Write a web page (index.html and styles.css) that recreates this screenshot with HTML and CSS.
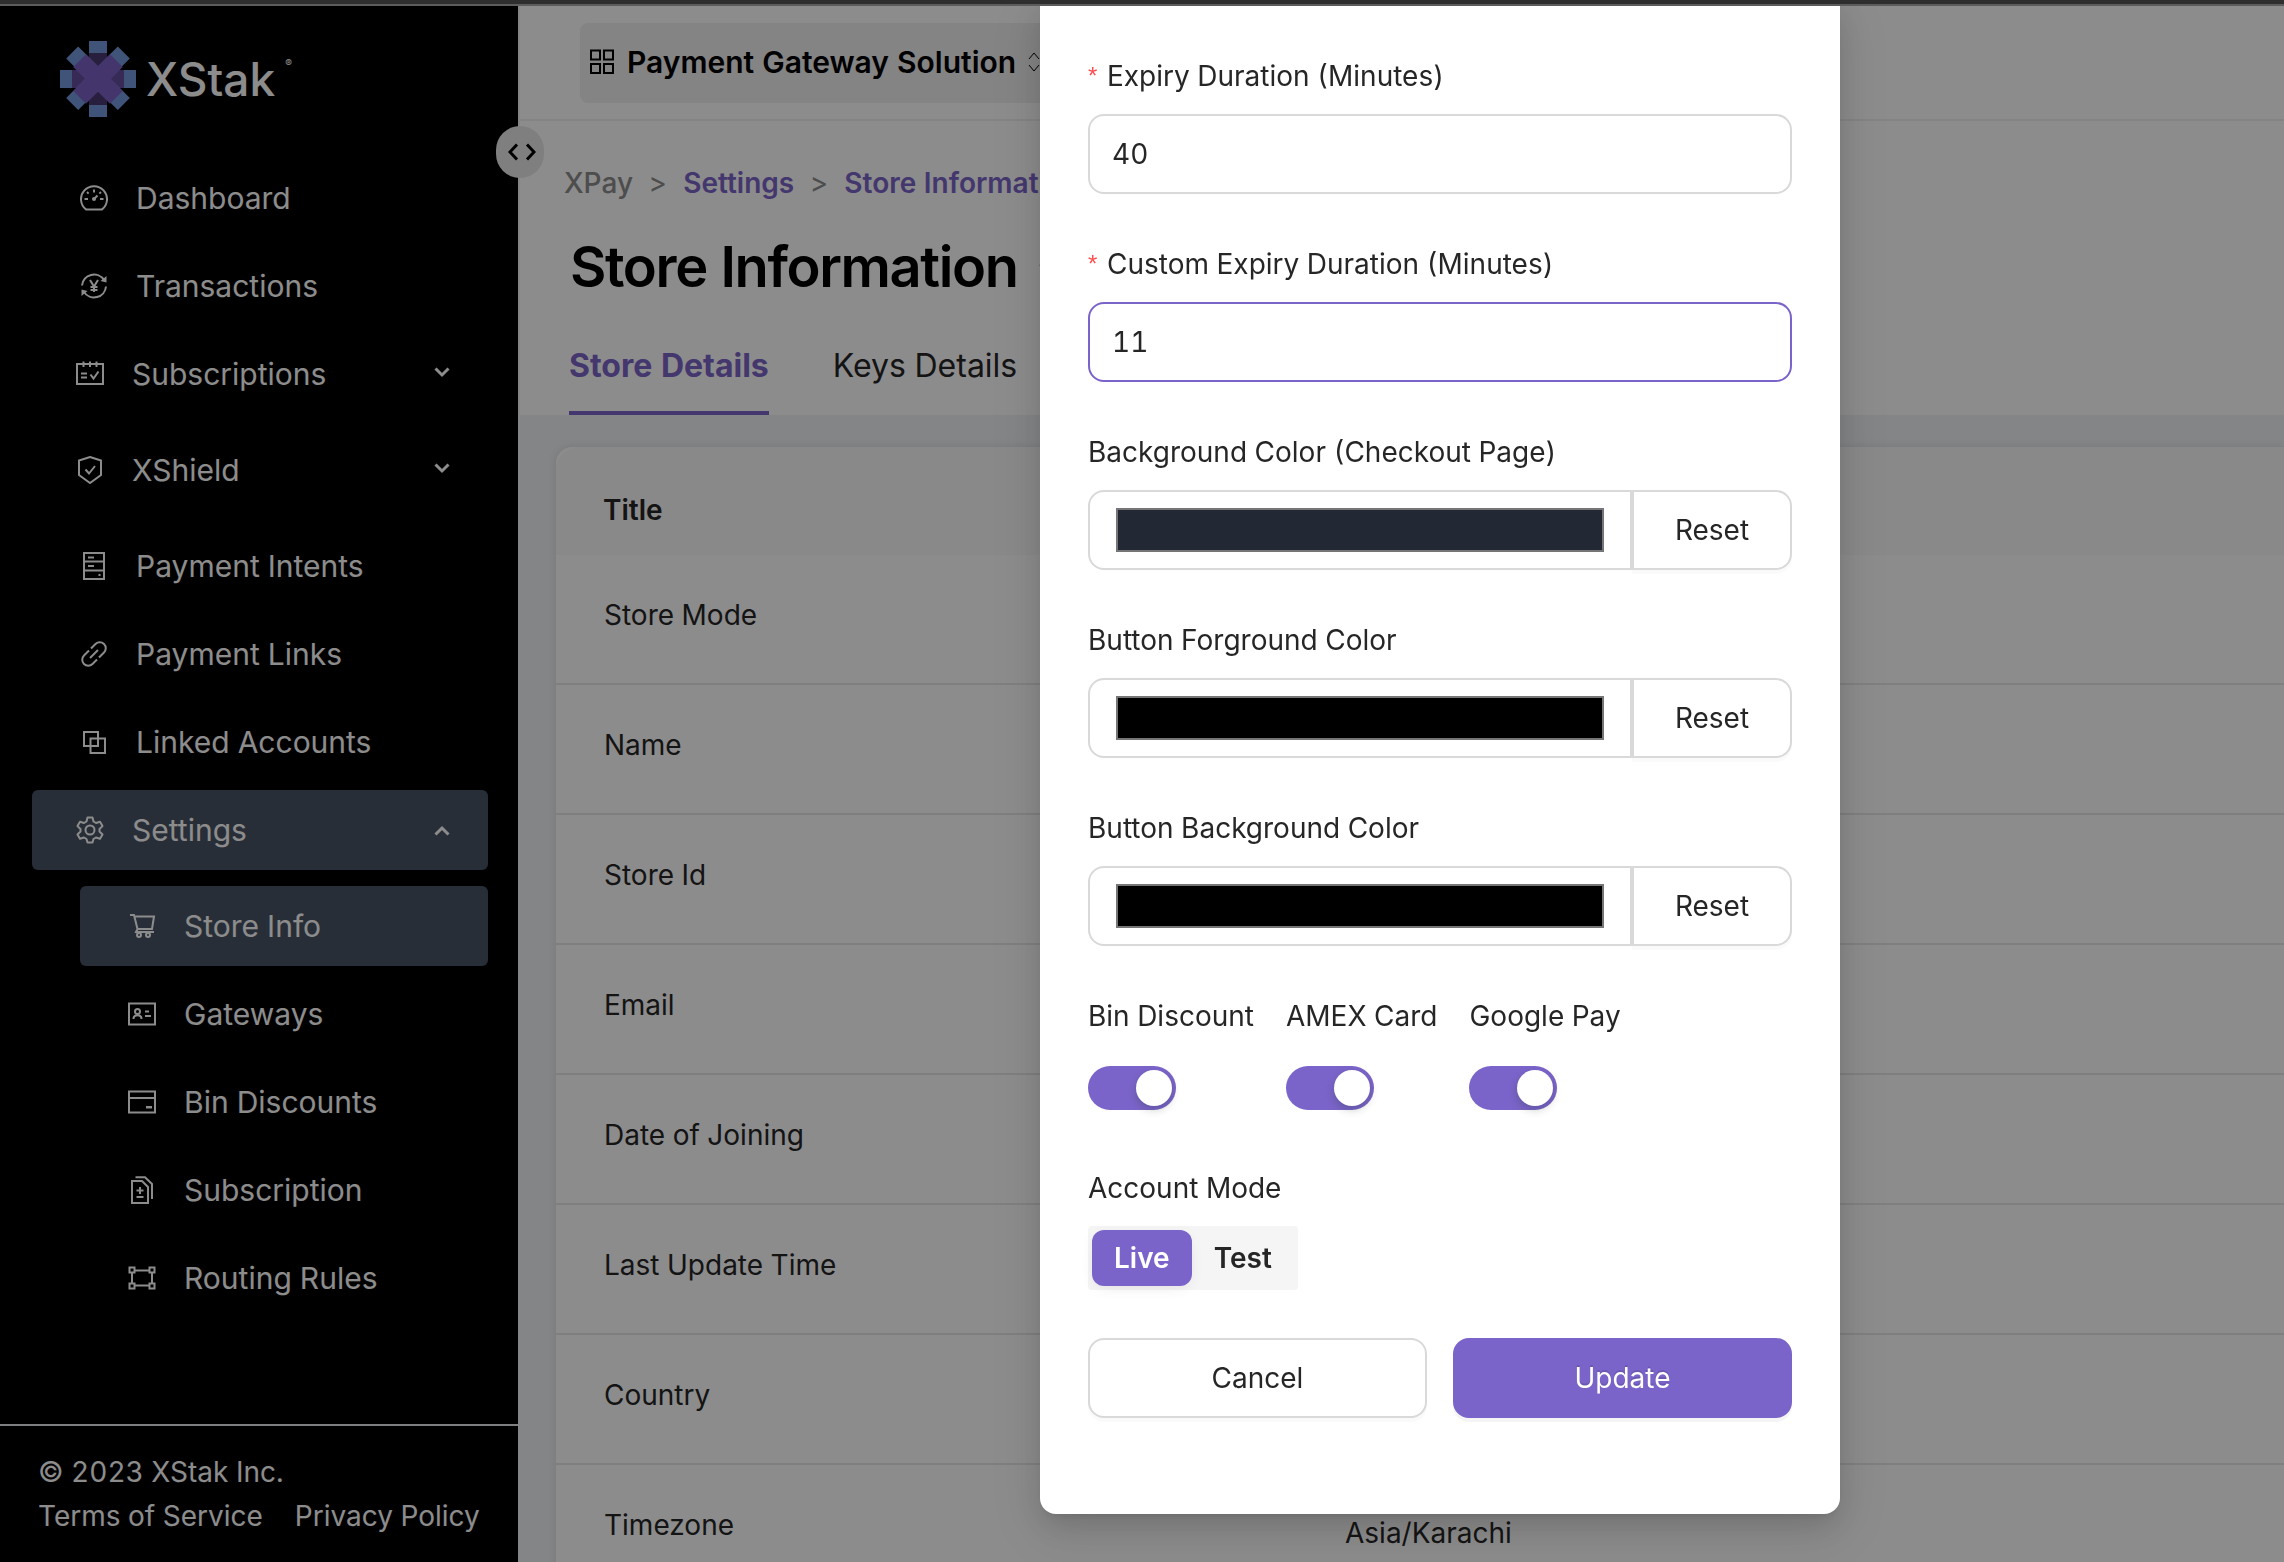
FILE: index.html
```html
<!DOCTYPE html>
<html lang="en">
<head>
<meta charset="utf-8">
<meta name="viewport" content="width=device-width, initial-scale=1">
<title>Store Information</title>
<link rel="stylesheet" href="styles.css">
</head>
<body>
<div class="window-edge"></div>
<div class="app">
  <aside class="sidebar">
    <div class="brand">
      <svg class="brand-mark" viewBox="-38 -38 76 76" aria-hidden="true">
        <g fill="#759ade">
          <path d="M-9-38H9v12H-9zM-9 26H9v12H-9zM-38-9h12V9h-12zM26-9h12V9H26z"/>
        </g>
        <path fill="#483970" d="M-9-26H9V26H-9z"/>
        <path fill="#644d9f" d="M-26-9h52V9h-52z"/>
        <path fill="#483970" d="M-9-26H9L0-9zM-9 26H9L0 9z"/>
        <g transform="rotate(45)">
          <path fill="#759ade" d="M-9-37H8V36H-9z"/>
          <path fill="#759ade" d="M-37-9H36V8H-37z"/>
          <path fill="#7d62c6" d="M-9-26H9V26H-9z"/>
          <path fill="#7d62c6" d="M-26-9H26V9H-26z"/>
        </g>
      </svg>
      <span class="brand-name">XStak</span><span class="brand-reg">®</span>
    </div>
    <nav class="menu">
      <a class="item" href="#"><svg class="icon" viewBox="0 0 28 28"><path d="M6 25.4A13 13 0 1 1 22 25.4z"/><path d="M14 5.5v3M4.5 15H8M20 15h3.500M7 8l1.600 1.600M21 8l-1.600 1.600M14 15l3.500-3.500"/><circle cx="14" cy="15" r="1"/></svg>Dashboard</a>
      <a class="item" href="#"><svg class="icon" viewBox="0 0 28 28"><path d="M2 13.500A12 12 0 0 1 24 8M26 14.500A12 12 0 0 1 4 20"/><path class="solid" d="M26.500 4v6.500l-6-1.500zM1.500 24v-6.500l6 1.500z"/><path d="M10 8l4 6.500L18 8M14 14.500V20M10.500 15h7M10.500 18h7"/></svg>Transactions</a>
      <button class="item parent" type="button"><svg class="icon" viewBox="0 0 28 28"><path d="M1 4h26v20H1zM7.500 1.500V7M14 1.500V7M20.500 1.500V7M5 13.500h6M5 17.500h6M14.500 14.500l3 4 5-7"/></svg>Subscriptions<svg class="chevron" viewBox="0 0 16 16"><path d="M1.500 2.500L8 9l6.500-6.500"/></svg></button>
      <button class="item parent" type="button"><svg class="icon" viewBox="0 0 28 28"><path d="M14 1l11 3.500v14.500L14 27 3 19V4.500zM9.500 13.500l3.500 4 6-7.500"/></svg>XShield<svg class="chevron" viewBox="0 0 16 16"><path d="M1.500 2.500L8 9l6.500-6.500"/></svg></button>
      <a class="item" href="#"><svg class="icon" viewBox="0 0 28 28"><path d="M4 1h20v26H4zM4 9.500h20M4 18.500h20M8 5.500h6M8 14h6M18.500 23h2"/></svg>Payment Intents</a>
      <a class="item" href="#"><svg class="icon" viewBox="0 0 28 28"><path d="M11 8.500l4.500-4.500a5.800 5.800 0 0 1 8.500 8.500L19 17.500M17 19.500l-4.500 4.500A5.800 5.800 0 0 1 4 15.500L9 10.500M10 18l8-8"/></svg>Payment Links</a>
      <a class="item" href="#"><svg class="icon" viewBox="0 0 28 28"><path d="M4 4h14v14H4zM10.500 10.500H25V25H10.500z"/></svg>Linked Accounts</a>
      <button class="item parent active" type="button"><svg class="icon" viewBox="0 0 28 28"><path d="M11.500 1.500h5l1 4 2.500 1.500 4-1.200 2.500 4.300-3 2.900v2.500l3 3-2.500 4.200-4-1.200-2.500 1.500-1 3.500h-5l-1-3.500L8 21.500l-4 1.200L1.500 18.500l3-3V13l-3-2.900L4 5.800 8 7l2.500-1.500z" stroke-linejoin="round"/><circle cx="14" cy="14" r="4.500"/></svg>Settings<svg class="chevron" viewBox="0 0 16 16"><path d="M1.500 12.500L8 6l6.500 6.500"/></svg></button>
      <div class="submenu">
        <a class="item active" href="#"><svg class="icon" viewBox="0 0 28 28"><path d="M2 3h4l3.500 14h14.500L26 4.500H6.500M9.500 17L8 20h18"/><circle cx="11" cy="23" r="2"/><circle cx="20" cy="23" r="2"/></svg>Store Info</a>
        <a class="item" href="#"><svg class="icon" viewBox="0 0 28 28"><path d="M1 3.500h26v21H1z"/><path d="M17 11.500h4M17 16h6M5.500 19c0-5 8-5 8 0"/><circle cx="9.500" cy="11.500" r="2.500"/></svg>Gateways</a>
        <a class="item" href="#"><svg class="icon" viewBox="0 0 28 28"><path d="M1 3.500h26v21H1zM1 10h26"/><path class="solid" d="M18 18h6v2.500h-6z"/></svg>Bin Discounts</a>
        <a class="item" href="#"><svg class="icon" viewBox="0 0 28 28"><path d="M4 5h10l6 6v16H4zM7.500 1.200H17L24 8v15M12 11v7M8.500 14.500h7M8.500 21h7"/></svg>Subscription</a>
        <a class="item" href="#"><svg class="icon" viewBox="0 0 28 28"><path d="M1.500 3.500h5v5h-5zM21.500 3.500h5v5h-5zM1.500 19.500h5v5h-5zM21.500 19.500h5v5h-5zM6.500 6.500h15M6.500 21.500h15M4 8.500v11M24 8.500v11"/></svg>Routing Rules</a>
      </div>
    </nav>
    <footer class="legal">
      <span>© 2023 XStak Inc.</span>
      <div class="legal-links"><a href="#">Terms of Service</a><a href="#">Privacy Policy</a></div>
    </footer>
    <button class="collapse" type="button" aria-label="Toggle menu"><svg viewBox="0 0 28 20"><path d="M9 2.500L2 10l7 7.500M19 2.500L26 10l-7 7.500"/></svg></button>
  </aside>

  <main class="main">
    <header class="topbar">
      <button class="product" type="button"><svg class="grid-icon" viewBox="0 0 26 26"><path d="M2 1.500h9v9H2zM15 1.500h9v9h-9zM2 15h9v9H2zM15 15h9v9h-9z"/></svg>Payment Gateway Solution<svg class="sort-icon" viewBox="0 0 12 20"><path d="M1 7l5-6 5 6M1 13l5 6 5-6"/></svg></button>
    </header>
    <section class="page-head">
      <nav class="crumbs"><span>XPay</span><span class="sep">&gt;</span><a href="#">Settings</a><span class="sep">&gt;</span><a href="#">Store Information</a></nav>
      <div class="title-row">
        <h1>Store Information</h1>
        <svg class="sync" viewBox="0 0 36 36"><path d="M3 17A15 15 0 0 1 30 9M33 19A15 15 0 0 1 6 27"/><path class="tip" d="M33 4v9l-8-2zM3 32v-9l8 2z"/></svg>
      </div>
      <div class="tabs"><button class="tab current" type="button">Store Details</button><button class="tab" type="button">Keys Details</button></div>
    </section>
    <section class="card">
      <table class="details">
        <thead><tr><th>Title</th><th></th></tr></thead>
        <tbody>
          <tr><td>Store Mode</td><td></td></tr>
          <tr><td>Name</td><td></td></tr>
          <tr><td>Store Id</td><td></td></tr>
          <tr><td>Email</td><td></td></tr>
          <tr><td>Date of Joining</td><td></td></tr>
          <tr><td>Last Update Time</td><td></td></tr>
          <tr><td>Country</td><td></td></tr>
          <tr><td>Timezone</td><td class="value">Asia/Karachi</td></tr>
        </tbody>
      </table>
    </section>
  </main>
</div>

<div class="overlay">
  <form class="modal">
    <div class="field">
      <label for="expiry"><span class="req">*</span>Expiry Duration (Minutes)</label>
      <input class="text" id="expiry" type="text" value="40">
    </div>
    <div class="field">
      <label for="custom"><span class="req">*</span>Custom Expiry Duration (Minutes)</label>
      <input class="text focused" id="custom" type="text" value="11">
    </div>
    <div class="field">
      <label for="bg">Background Color (Checkout Page)</label>
      <div class="color-group"><span class="color-box"><input id="bg" type="color" value="#222935"></span><button type="button">Reset</button></div>
    </div>
    <div class="field">
      <label for="btn-fg">Button Forground Color</label>
      <div class="color-group"><span class="color-box"><input id="btn-fg" type="color" value="#000000"></span><button type="button">Reset</button></div>
    </div>
    <div class="field">
      <label for="btn-bg">Button Background Color</label>
      <div class="color-group"><span class="color-box"><input id="btn-bg" type="color" value="#000000"></span><button type="button">Reset</button></div>
    </div>
    <div class="switches">
      <label class="switch">Bin Discount<input type="checkbox" checked></label>
      <label class="switch">AMEX Card<input type="checkbox" checked></label>
      <label class="switch">Google Pay<input type="checkbox" checked></label>
    </div>
    <fieldset class="mode">
      <legend>Account Mode</legend>
      <div class="segmented">
        <label><input type="radio" name="mode" checked>Live</label>
        <label><input type="radio" name="mode">Test</label>
      </div>
    </fieldset>
    <div class="actions">
      <button class="cancel" type="button">Cancel</button>
      <button class="update" type="button">Update</button>
    </div>
  </form>
</div>
</body>
</html>
```
FILE: styles.css
```css
* {
  box-sizing: border-box;
}

html,
body {
  height: 100%;
  overflow: hidden;
}

body {
  margin: 0;
  background: #f0f2f5;
  color: #262626;
  font: 400 28px/44px Inter, "Liberation Sans", sans-serif;
  font-feature-settings: "tnum";
  display: flex;
  flex-direction: column;
}

button,
input {
  font: inherit;
  font-feature-settings: inherit;
  color: inherit;
}

button {
  cursor: pointer;
}

a {
  color: inherit;
  text-decoration: none;
}

svg {
  fill: none;
  flex: none;
}

.window-edge {
  flex: none;
  height: 6px;
  background: #2e2e2e;
  border-bottom: 2px solid #5c5c5c;
  position: relative;
  z-index: 3;
}

.app {
  flex: 1;
  min-height: 0;
  display: flex;
}

/* Sidebar */

.sidebar {
  flex: none;
  width: 520px;
  position: relative;
  display: flex;
  flex-direction: column;
  background: #000;
  color: #fff;
  border-right: 2px solid #f0f2f5;
}

.brand {
  display: flex;
  align-items: center;
  gap: 10px;
  padding: 35px 60px 34px;
}

.brand-mark {
  width: 76px;
  height: 76px;
}

.brand-name {
  font-size: 46px;
  line-height: 56px;
  font-weight: 500;
}

.brand-reg {
  align-self: flex-start;
  font-size: 10px;
  line-height: 44px;
}

.menu {
  flex: 1;
  display: flex;
  flex-direction: column;
  gap: 8px;
  padding: 7px 30px 0 32px;
  font-size: 30px;
}

.item {
  flex: none;
  height: 80px;
  display: flex;
  align-items: center;
  gap: 28px;
  padding: 0 48px;
  border: 0;
  border-radius: 6px;
  background: none;
  color: #fff;
  text-align: left;
}

.parent {
  padding: 0 38px 0 44px;
}

.parent + .item {
  margin-top: 8px;
}

.item.active {
  background: #4a5465;
}

.submenu {
  display: flex;
  flex-direction: column;
  gap: 8px;
  padding: 8px 0 0 48px;
}

.icon {
  width: 28px;
  height: 28px;
  stroke: #fff;
  stroke-width: 2;
}

.icon .solid {
  fill: #fff;
  stroke: none;
}

.chevron {
  width: 16px;
  height: 16px;
  margin-left: auto;
  stroke: #fff;
  stroke-width: 3;
}

.legal {
  border-top: 2px solid #e5e7eb;
  padding: 24px 38px;
  height: 138px;
}

.legal-links {
  display: flex;
  gap: 32px;
  white-space: nowrap;
}

.collapse {
  position: absolute;
  top: 120px;
  right: -26px;
  width: 48px;
  height: 52px;
  padding: 0 0 0 4px;
  border: 0;
  border-radius: 24px;
  background: #e8e8e8;
  display: grid;
  place-items: center;
}

.collapse svg {
  width: 28px;
  height: 20px;
  stroke: #000;
  stroke-width: 3;
}

/* Main */

.main {
  flex: 1;
  min-width: 0;
  display: flex;
  flex-direction: column;
}

.topbar {
  flex: none;
  height: 115px;
  padding: 17px 60px;
  background: #fff;
  border-bottom: 2px solid #f0f0f0;
}

.product {
  height: 80px;
  display: flex;
  align-items: center;
  gap: 12px;
  padding: 0 9px 2px;
  border: 0;
  border-radius: 8px;
  background: #f0f0f0;
  color: #000;
  font-size: 30px;
  font-weight: 600;
}

.grid-icon {
  width: 26px;
  height: 26px;
  stroke: #000;
  stroke-width: 2;
}

.sort-icon {
  width: 12px;
  height: 20px;
  stroke: #000;
}

.page-head {
  flex: none;
  height: 294px;
  padding: 40px 44px 0;
  background: #fff;
  display: flex;
  flex-direction: column;
}

.crumbs {
  display: flex;
  gap: 16px;
  color: #8c8c8c;
  font-weight: 500;
  white-space: nowrap;
}

.crumbs a {
  color: #7b64c9;
  font-weight: 600;
}

.crumbs .sep {
  font-weight: 400;
}

.title-row {
  display: flex;
  align-items: center;
  gap: 20px;
  padding: 30px 6px 0;
}

h1 {
  margin: 0;
  color: #000;
  font-size: 56px;
  line-height: 64px;
  font-weight: 600;
  letter-spacing: -0.025em;
}

.sync {
  width: 36px;
  height: 36px;
  stroke: #7b64c9;
  stroke-width: 3;
}

.sync .tip {
  fill: #7b64c9;
  stroke: none;
}

.tabs {
  display: flex;
  gap: 64px;
  margin-top: auto;
  padding-left: 5px;
}

.tab {
  padding: 0 0 20px;
  border: 0;
  border-bottom: 4px solid transparent;
  background: none;
  font-size: 32px;
  line-height: 50px;
}

.tab.current {
  border-color: #7b64c9;
  color: #7b64c9;
  font-weight: 700;
}

.card {
  margin: 32px 0 0 36px;
  background: #fff;
  border-radius: 16px 0 0 0;
  box-shadow: 0 0 8px rgba(0, 0, 0, 0.1);
}

.details {
  width: 100%;
  border-collapse: separate;
  border-spacing: 0;
  table-layout: fixed;
}

.details th {
  width: 741px;
  height: 108px;
  padding: 18px 47px 0;
  background: #fafafa;
  text-align: left;
  font-weight: 600;
}

.details th:first-child {
  border-top-left-radius: 24px;
}

.details th + th {
  width: auto;
}

.details td {
  height: 130px;
  padding: 38px 48px 46px;
  border-bottom: 2px solid #e8e8e8;
}

.details .value {
  padding: 46px 48px 38px;
}

/* Dialog */

.overlay {
  position: fixed;
  inset: 0;
  z-index: 2;
  padding-left: 1040px;
  background: rgba(0, 0, 0, 0.45);
}

.modal {
  width: 800px;
  padding: 54px 48px 96px;
  background: #fff;
  border-radius: 0 0 16px 16px;
  box-shadow: 0 12px 32px rgba(0, 0, 0, 0.14), 0 6px 12px -8px rgba(0, 0, 0, 0.2), 0 18px 56px 16px rgba(0, 0, 0, 0.06);
}

.field {
  display: flex;
  flex-direction: column;
  gap: 16px;
  margin-bottom: 48px;
}

.field label {
  display: flex;
}

.req {
  width: 19px;
  color: #ff4d4f;
  font-family: "Liberation Sans", sans-serif;
  font-size: 24px;
}

.text {
  height: 80px;
  padding: 0 22px;
  border: 2px solid #d9d9d9;
  border-radius: 16px;
  background: #fff;
  outline: 0;
}

.text.focused {
  border-color: #7b64c9;
}

.color-group {
  height: 80px;
  display: flex;
}

.color-box {
  flex: 1;
  display: flex;
  padding: 16px 26px;
  border: 2px solid #d9d9d9;
  border-radius: 16px 0 0 16px;
}

.color-box input {
  flex: 1;
  height: 44px;
  padding: 0;
  border: 2px solid #767676;
  background: none;
}

.color-box input::-webkit-color-swatch-wrapper {
  padding: 0;
}

.color-box input::-webkit-color-swatch {
  border: 0;
}

.color-group button {
  width: 160px;
  padding: 0;
  border: 2px solid #d9d9d9;
  border-radius: 0 16px 16px 0;
  background: #fff;
  box-shadow: 0 4px 0 rgba(0, 0, 0, 0.02);
}

.switches {
  display: flex;
  gap: 32px;
  margin-bottom: 56px;
}

.switch {
  display: flex;
  flex-direction: column;
  align-items: flex-start;
  gap: 28px;
}

.switch input {
  appearance: none;
  width: 88px;
  height: 44px;
  margin: 0;
  padding: 4px;
  border-radius: 22px;
  background: #7b64c9;
  display: flex;
  justify-content: flex-end;
}

.switch input::before {
  content: "";
  width: 36px;
  height: 36px;
  border-radius: 18px;
  background: #fff;
  box-shadow: 0 4px 8px rgba(0, 35, 11, 0.2);
}

.mode {
  margin: 0;
  padding: 0;
  border: 0;
}

.mode legend {
  padding: 0;
}

.segmented {
  width: max-content;
  margin-top: 16px;
  display: flex;
  padding: 4px;
  border-radius: 4px;
  background: #f5f5f5;
  font-weight: 600;
}

.segmented label {
  padding: 0 22px;
  border-radius: 12px;
  line-height: 56px;
}

.segmented label:has(:checked) {
  background: #7b64c9;
  color: #fff;
  box-shadow: 0 4px 16px -4px rgba(0, 0, 0, 0.1);
}

.segmented input {
  appearance: none;
  position: absolute;
  margin: 0;
}

.actions {
  display: grid;
  grid-template-columns: 1fr 1fr;
  gap: 26px;
  margin-top: 48px;
}

.actions button {
  height: 80px;
  border: 2px solid #d9d9d9;
  border-radius: 16px;
  background: #fff;
  box-shadow: 0 4px 0 rgba(0, 0, 0, 0.02);
}

.actions .update {
  border-color: #7b64c9;
  background: #7b64c9;
  color: #fff;
  text-shadow: 0 -2px 0 rgba(0, 0, 0, 0.12);
  box-shadow: 0 4px 0 rgba(0, 0, 0, 0.04);
}
```
